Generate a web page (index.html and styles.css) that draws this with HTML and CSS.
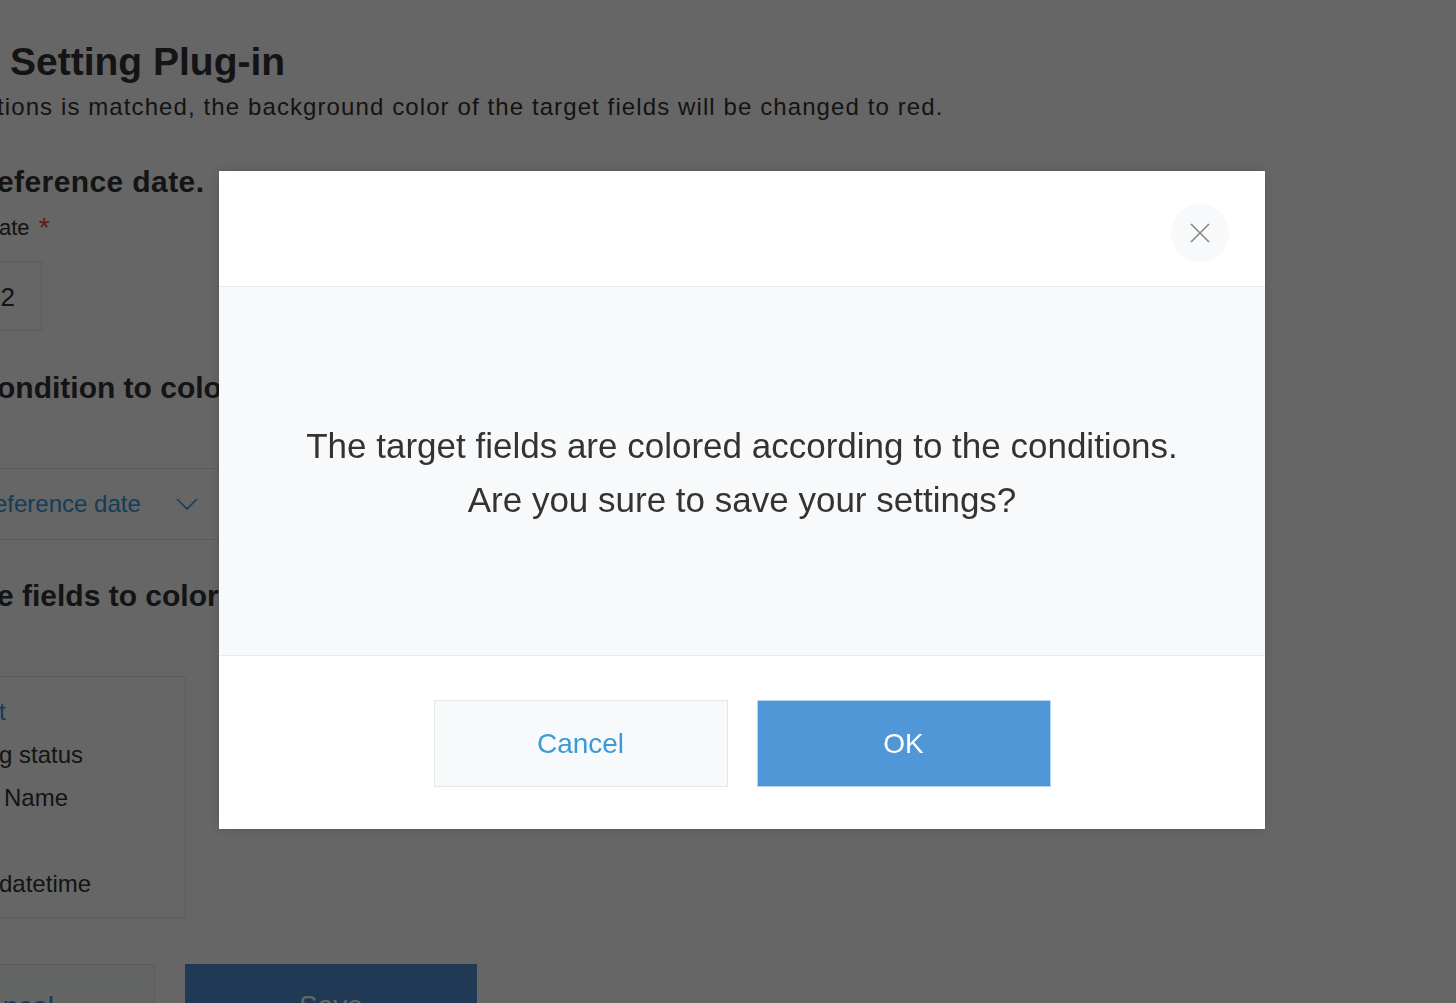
FILE: index.html
```html
<!DOCTYPE html>
<html lang="en">
<head>
<meta charset="utf-8">
<title>Setting Plug-in</title>
<link rel="stylesheet" href="styles.css">
</head>
<body>
<main class="page">
  <h1 class="title">Setting Plug-in</h1>
  <p class="desc">tions is matched, the background color of the target fields will be changed to red.</p>

  <h2 class="section sec-ref">eference date.</h2>
  <div class="label">ate <span class="req">*</span></div>
  <div class="input"><span>22</span></div>

  <h2 class="section sec-cond">ondition to color</h2>
  <div class="select">
    <span class="select-text">eference date</span>
    <svg class="chev" width="22" height="12" viewBox="0 0 22 12"><path d="M1 1 L11 11 L21 1" fill="none" stroke="currentColor" stroke-width="1.6"/></svg>
  </div>

  <h2 class="section sec-fields">e fields to color</h2>
  <div class="list">
    <div class="item item-blue">t</div>
    <div class="item">g status</div>
    <div class="item item-name">Name</div>
    <div class="item"></div>
    <div class="item">datetime</div>
  </div>

  <div class="actions">
    <div class="btn-bg btn-bg-cancel">ncel</div>
    <div class="btn-bg btn-bg-save">Save</div>
  </div>
</main>

<div class="overlay">
  <div class="modal" role="dialog">
    <div class="modal-header">
      <button class="close" aria-label="Close">
        <svg width="20" height="20" viewBox="0 0 20 20"><path d="M1 1 L19 19 M19 1 L1 19" fill="none" stroke="#8a8a8a" stroke-width="1.7"/></svg>
      </button>
    </div>
    <div class="modal-body">
      <p>The target fields are colored according to the conditions.<br>Are you sure to save your settings?</p>
    </div>
    <div class="modal-footer">
      <button class="mbtn mbtn-cancel">Cancel</button>
      <button class="mbtn mbtn-ok">OK</button>
    </div>
  </div>
</div>
</body>
</html>
```

FILE: styles.css
```css
html, body {
  margin: 0;
  padding: 0;
  height: 100%;
  overflow: hidden;
}
body {
  background: #ffffff;
  font-family: "Liberation Sans", Arial, sans-serif;
  color: #333333;
}

/* ---------- background page ---------- */
.page {
  padding-top: 36px;
}
.title {
  margin: 0 0 0 10px;
  font-size: 39px;
  line-height: 52px;
  font-weight: 700;
  color: #333;
}
.desc {
  margin: 2px 0 0 -3px;
  font-size: 24px;
  line-height: 34px;
  letter-spacing: 1.1px;
  color: #333;
  white-space: nowrap;
}
.section {
  margin: 0 0 0 -3px;
  font-size: 30px;
  line-height: 40px;
  font-weight: 700;
  color: #333;
  white-space: nowrap;
}
.sec-ref { margin-top: 38px; letter-spacing: 0.4px; }
.label {
  margin: 10px 0 0 -1px;
  font-size: 22px;
  line-height: 32px;
  color: #333;
}
.req {
  color: #e74c3c;
  font-size: 28px;
  margin-left: 3px;
  vertical-align: -2px;
}
.input {
  margin: 17px 0 0 -60px;
  width: 55px;
  height: 70px;
  border: 1px solid #e3e7e8;
  box-sizing: border-box;
  display: flex;
  align-items: center;
  padding-left: 45px;
  padding-top: 3px;
  font-size: 26px;
  color: #333;
  width: 102px;
}
.sec-cond { margin-top: 37px; }
.select {
  margin: 60px 0 0 -40px;
  width: 300px;
  height: 70px;
  border: 1px solid #e3e7e8;
  display: flex;
  align-items: center;
  font-size: 24px;
  color: #3498db;
  padding-left: 33px;
}
.select-text { white-space: nowrap; }
.chev { margin-left: 35px; color: #3498db; }
.sec-fields { margin-top: 36px; }
.list {
  margin: 60px 0 0 -40px;
  width: 226px;
  height: 242px;
  border: 1px solid #e3e7e8;
  box-sizing: border-box;
  padding: 15px 0 0 38px;
  font-size: 24px;
  color: #333;
}
.item { height: 43px; line-height: 40px; white-space: nowrap; }
.item-blue { color: #3498db; }
.item-name { padding-left: 5px; }
.actions {
  display: flex;
  gap: 30px;
  margin: 46px 0 0 -137px;
}
.btn-bg {
  height: 86px;
  width: 292px;
  box-sizing: border-box;
  font-size: 28px;
  display: flex;
  justify-content: center;
  padding-top: 26px;
}
.btn-bg-cancel {
  border: 1px solid #e3e7e8;
  background: #f7f9fa;
  color: #3498db;
  justify-content: flex-end;
  padding-right: 100px;
}
.btn-bg-save {
  background: #5290d2;
  color: #fff;
}

/* ---------- overlay & modal ---------- */
.overlay {
  position: fixed;
  inset: 0;
  background: rgba(0, 0, 0, 0.6);
  display: flex;
  align-items: center;
  justify-content: center;
  padding-left: 28px;
  padding-bottom: 3px;
}
.modal {
  width: 1046px;
  background: #ffffff;
  box-shadow: 0 0 10px rgba(0, 0, 0, 0.18);
  display: flex;
  flex-direction: column;
}
.modal-header {
  height: 116px;
  box-sizing: border-box;
  border-bottom: 1px solid #e9ecee;
  display: flex;
  justify-content: flex-end;
  align-items: flex-start;
  padding: 33px 36px 0 0;
}
.close {
  width: 58px;
  height: 58px;
  border-radius: 50%;
  border: none;
  background: #f7f9fa;
  display: flex;
  align-items: center;
  justify-content: center;
  padding: 0;
  cursor: pointer;
}
.modal-body {
  height: 369px;
  box-sizing: border-box;
  background: #f7f9fa;
  border-bottom: 1px solid #e9ecee;
  display: flex;
  align-items: center;
  justify-content: center;
  padding-top: 4px;
}
.modal-body p {
  margin: 0;
  text-align: center;
  font-size: 35px;
  line-height: 54px;
  color: #333;
}
.modal-footer {
  height: 173px;
  box-sizing: border-box;
  padding-top: 2px;
  display: flex;
  justify-content: center;
  align-items: center;
  gap: 29px;
}
.mbtn {
  width: 294px;
  height: 87px;
  box-sizing: border-box;
  font-family: "Liberation Sans", Arial, sans-serif;
  font-size: 28px;
  cursor: pointer;
}
.mbtn-cancel {
  background: #f7f9fa;
  border: 1px solid #e3e7e8;
  color: #3b9ad9;
}
.mbtn-ok {
  background: #4f97d6;
  border: 1px solid #b9d3ec;
  color: #ffffff;
}
```
